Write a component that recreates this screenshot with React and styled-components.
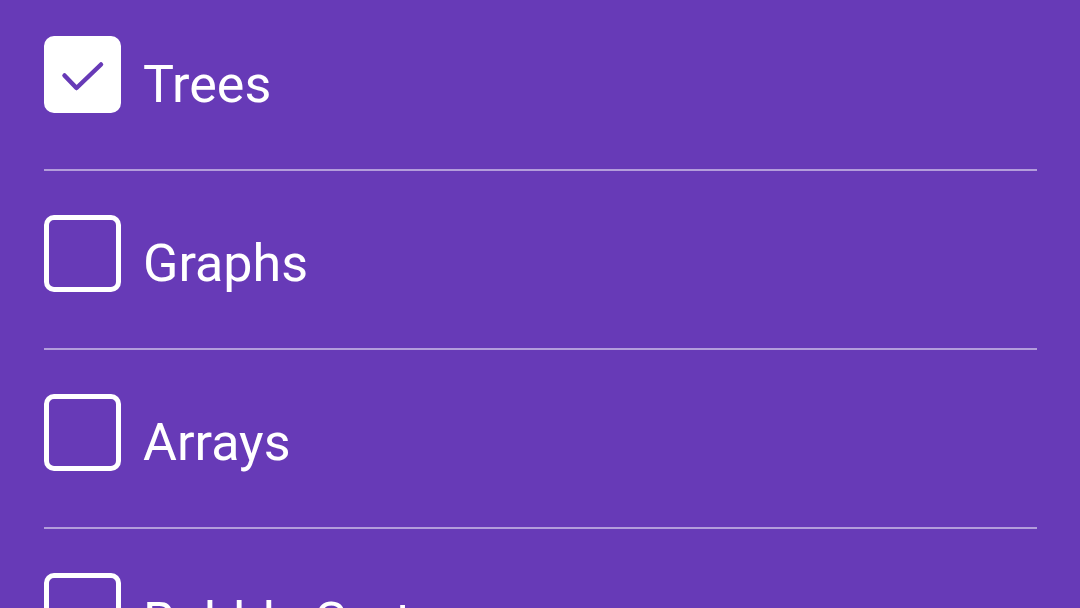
import React from "react";
import styled, { createGlobalStyle } from "styled-components";

const Global = createGlobalStyle`
  html, body {
    margin: 0;
    padding: 0;
    background: #673ab7;
    overflow: hidden;
  }
  body {
    font-family: Roboto, "Noto Sans", sans-serif;
  }
`;

const Screen = styled.div`
  width: 1080px;
  height: 608px;
  background: #673ab7;
  overflow: hidden;
`;

const List = styled.ul`
  list-style: none;
  margin: 0;
  padding: 0;
`;

const Item = styled.li`
  display: flex;
  flex-direction: column;
`;

const Row = styled.label`
  display: flex;
  align-items: center;
  gap: 22px;
  padding: ${(p) => (p.$first ? "36px" : "44px")} 44px 56px;
  cursor: pointer;
`;

const Box = styled.span`
  box-sizing: border-box;
  flex: none;
  width: 77px;
  height: 77px;
  border-radius: 10px;
  border: 5px solid #ffffff;
  background: ${(p) => (p.$checked ? "#ffffff" : "transparent")};
  display: flex;
  align-items: center;
  justify-content: center;
`;

const Label = styled.span`
  color: #ffffff;
  font-family: Roboto, "Noto Sans", sans-serif;
  font-size: 52px;
  line-height: 52px;
  margin-top: 21px;
  white-space: nowrap;
`;

const Divider = styled.div`
  height: 2px;
  margin: 0 43px 0 44px;
  background: #b39ddb;
`;

const Check = () => (
  <svg width="46" height="36" viewBox="0 0 46 36" fill="none">
    <path
      d="M4.5 18.5 L16.5 31 L41 7.5"
      stroke="#673ab7"
      strokeWidth="4.5"
      strokeLinecap="round"
      strokeLinejoin="round"
    />
  </svg>
);

const items = [
  { label: "Trees", checked: true },
  { label: "Graphs", checked: false },
  { label: "Arrays", checked: false },
  { label: "Bubble Sort", checked: false },
];

export default function App() {
  return (
    <Screen>
      <Global />
      <List>
        {items.map((it, i) => (
          <Item key={it.label}>
            <Row $first={i === 0}>
              <Box $checked={it.checked}>{it.checked && <Check />}</Box>
              <Label>{it.label}</Label>
            </Row>
            {i < items.length - 1 && <Divider />}
          </Item>
        ))}
      </List>
    </Screen>
  );
}
